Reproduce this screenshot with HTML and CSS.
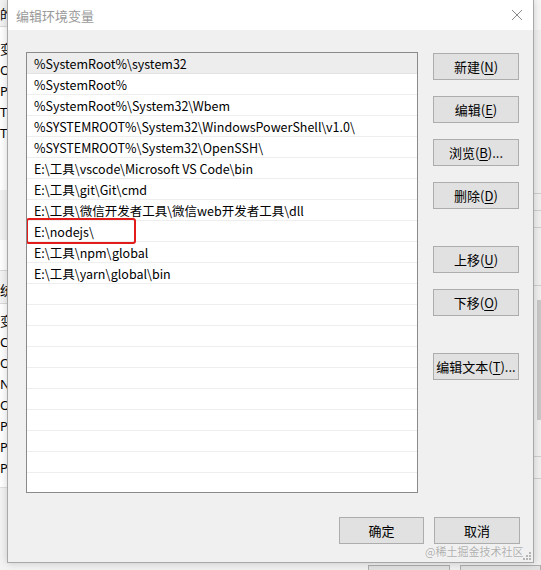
FILE: index.html
```html
<!DOCTYPE html>
<html lang="zh-CN">
<head>
<meta charset="utf-8">
<link rel="stylesheet" href="styles.css">
</head>
<body>
<div class="desktop">
  <div class="bgwin-left">
    <div class="bg-head">的</div>
    <div class="bg-rows top-rows">
      <div>变</div><div>Or</div><div>Pa</div><div>TE</div><div>TM</div>
    </div>
    <div class="bg-gap"></div>
    <div class="bg-head2">统</div>
    <div class="bg-rows">
      <div>变</div><div>Co</div><div>Or</div><div>NI</div><div>OS</div><div>Pa</div><div>PA</div><div>PR</div>
    </div>
    <div class="bg-foot"></div>
  </div>
  <div class="bgwin-right">
    <div class="r-top"></div>
    <div class="r-line l1"></div>
    <div class="r-line l2"></div>
    <div class="r-line l3"></div>
    <div class="r-line l4"></div>
    <div class="r-scroll"></div>
    <div class="r-line l5"></div>
    <div class="r-line l6"></div>
  </div>
  <div class="bg-bottom">
    <div class="bg-btn"></div>
    <div class="bg-btn"></div>
  </div>

  <div class="dialog">
    <div class="titlebar">
      <span class="title">编辑环境变量</span>
      <svg class="close" width="12" height="12" viewBox="0 0 12 12"><path d="M1 1L11 11M11 1L1 11" stroke="#8a8a8a" stroke-width="1" fill="none"/></svg>
    </div>
    <div class="body">
      <div class="list">
        <div class="row sel">%SystemRoot%\system32</div>
        <div class="row">%SystemRoot%</div>
        <div class="row">%SystemRoot%\System32\Wbem</div>
        <div class="row">%SYSTEMROOT%\System32\WindowsPowerShell\v1.0\</div>
        <div class="row">%SYSTEMROOT%\System32\OpenSSH\</div>
        <div class="row">E:\工具\vscode\Microsoft VS Code\bin</div>
        <div class="row">E:\工具\git\Git\cmd</div>
        <div class="row">E:\工具\微信开发者工具\微信web开发者工具\dll</div>
        <div class="row">E:\nodejs\</div>
        <div class="row">E:\工具\npm\global</div>
        <div class="row">E:\工具\yarn\global\bin</div>
        <div class="row"></div>
        <div class="row"></div>
        <div class="row"></div>
        <div class="row"></div>
        <div class="row"></div>
        <div class="row"></div>
        <div class="row"></div>
        <div class="row"></div>
        <div class="row"></div>
        <div class="row last"></div>
        <div class="mark"></div>
      </div>
      <div class="side">
        <button class="btn">新建(<u>N</u>)</button>
        <button class="btn">编辑(<u>E</u>)</button>
        <button class="btn">浏览(<u>B</u>)...</button>
        <button class="btn">删除(<u>D</u>)</button>
        <button class="btn group">上移(<u>U</u>)</button>
        <button class="btn">下移(<u>O</u>)</button>
        <button class="btn group">编辑文本(<u>T</u>)...</button>
      </div>
    </div>
    <div class="footer">
      <button class="btn ok">确定</button>
      <button class="btn cancel">取消</button>
    </div>
    <div class="grip">
      <svg width="8" height="8" viewBox="0 0 8 8"><g fill="#b5b5b5"><rect x="6" y="0" width="2" height="2"/><rect x="3" y="3" width="2" height="2"/><rect x="6" y="3" width="2" height="2"/><rect x="0" y="6" width="2" height="2"/><rect x="3" y="6" width="2" height="2"/><rect x="6" y="6" width="2" height="2"/></g></svg>
    </div>
  </div>
  <div class="watermark">@稀土掘金技术社区</div>
</div>
</body>
</html>
```
FILE: styles.css
```css
* { box-sizing: border-box; }
html, body { margin: 0; padding: 0; }
body {
  width: 541px;
  height: 570px;
  overflow: hidden;
  background: #f0f0f0;
  font-family: "Noto Sans CJK SC", "Noto Sans", sans-serif;
  font-size: 13px;
  color: #000;
}
.desktop {
  position: relative;
  width: 541px;
  height: 570px;
  overflow: hidden;
}

/* background windows */
.bgwin-left {
  position: absolute;
  left: 0;
  top: 0;
  width: 40px;
  height: 570px;
  background: #fff;
  display: flex;
  flex-direction: column;
}
.bg-head {
  height: 27px;
  line-height: 27px;
  background: #f3f3f3;
  border-bottom: 1px solid #d9d9d9;
  flex: none;
}
.bg-rows { flex: none; }
.top-rows { padding-top: 12px; }
.bg-rows div {
  height: 21px;
  line-height: 21px;
  font-family: "Noto Sans", sans-serif;
}
.bg-gap {
  height: 50px;
  margin-top: 46px;
  margin-bottom: 30px;
  background: #f3f3f3;
  flex: none;
}
.bg-head2 {
  height: 34px;
  line-height: 38px;
  background: #f3f3f3;
  border-bottom: 1px solid #d9d9d9;
  border-top: 1px solid #d9d9d9;
  flex: none;
  margin-bottom: 7px;
}
.bg-foot {
  flex: 1;
  margin-top: 8px;
  background: #f3f3f3;
  border-top: 1px solid #e0e0e0;
}
.bgwin-right {
  position: absolute;
  left: 520px;
  top: 0;
  width: 21px;
  height: 570px;
  background: #f0f0f0;
}
.r-top { position: absolute; left: 0; top: 0; width: 21px; height: 30px; background: #f7f7f7; }
.r-line { position: absolute; left: 0; width: 21px; height: 1px; background: #cfcfcf; }
.l1 { top: 193px; }
.l2 { top: 210px; }
.l3 { top: 227px; }
.l4 { top: 285px; }
.l5 { top: 456px; }
.l6 { top: 478px; }
.r-scroll { position: absolute; left: 17px; top: 300px; width: 4px; height: 120px; background: #c8c8c8; }
.bg-bottom {
  position: absolute;
  left: 0;
  top: 560px;
  width: 541px;
  height: 10px;
  display: flex;
  gap: 10px;
  padding-left: 368px;
  padding-top: 5px;
}
.bg-btn {
  width: 86px;
  height: 20px;
  background: #e1e1e1;
  border: 1px solid #adadad;
}

/* dialog */
.dialog {
  position: absolute;
  left: 7px;
  top: 0;
  width: 527px;
  height: 563px;
  background: #f0f0f0;
  border: 1px solid #a8a8a8;
  border-top: none;
  box-shadow: 0 0 8px rgba(0,0,0,0.18);
  display: flex;
  flex-direction: column;
}
.titlebar {
  height: 30px;
  background: #fff;
  display: flex;
  align-items: center;
  justify-content: space-between;
  padding: 0 10px 0 8px;
  flex: none;
}
.title {
  color: #9a9a9a;
  font-size: 13px;
}
.close { display: block; }
.body {
  display: flex;
  padding: 22px 0 0 18px;
  gap: 15px;
}
.list {
  position: relative;
  width: 392px;
  height: 441px;
  background: #fff;
  border: 1px solid #8a8a8a;
  overflow: hidden;
  font-size: 12.5px;
}
.row {
  height: 21px;
  line-height: 21px;
  padding-left: 7px;
  border-bottom: 1px solid #eeeeee;
  white-space: nowrap;
}
.row.sel { background: #ededed; border-bottom-color: #e3e3e3; }
.row.last { border-bottom: none; }
.mark {
  position: absolute;
  left: -1px;
  top: 165px;
  width: 110px;
  height: 26px;
  border: 2px solid #e21b1b;
  border-radius: 3px;
}
.side {
  display: flex;
  flex-direction: column;
  gap: 16px;
  padding-top: 1px;
}
.btn {
  width: 86px;
  height: 27px;
  background: #e1e1e1;
  border: 1px solid #adadad;
  font-family: "Noto Sans CJK SC", "Noto Sans", sans-serif;
  font-size: 13px;
  color: #000;
  padding: 0;
  margin: 0;
  line-height: 24px;
  text-align: center;
}
.btn u { text-underline-offset: 2px; }
.btn.group { margin-top: 21px; }
.footer {
  display: flex;
  justify-content: flex-end;
  gap: 10px;
  padding: 24px 13px 0 0;
}
.btn.ok { width: 85px; }
.grip {
  position: absolute;
  right: 2px;
  bottom: 2px;
  display: flex;
}
.watermark {
  position: absolute;
  left: 425px;
  top: 545px;
  font-size: 11px;
  line-height: 12px;
  color: rgba(150,150,150,0.75);
  text-shadow: 0 0 1px rgba(255,255,255,0.8);
}
```
